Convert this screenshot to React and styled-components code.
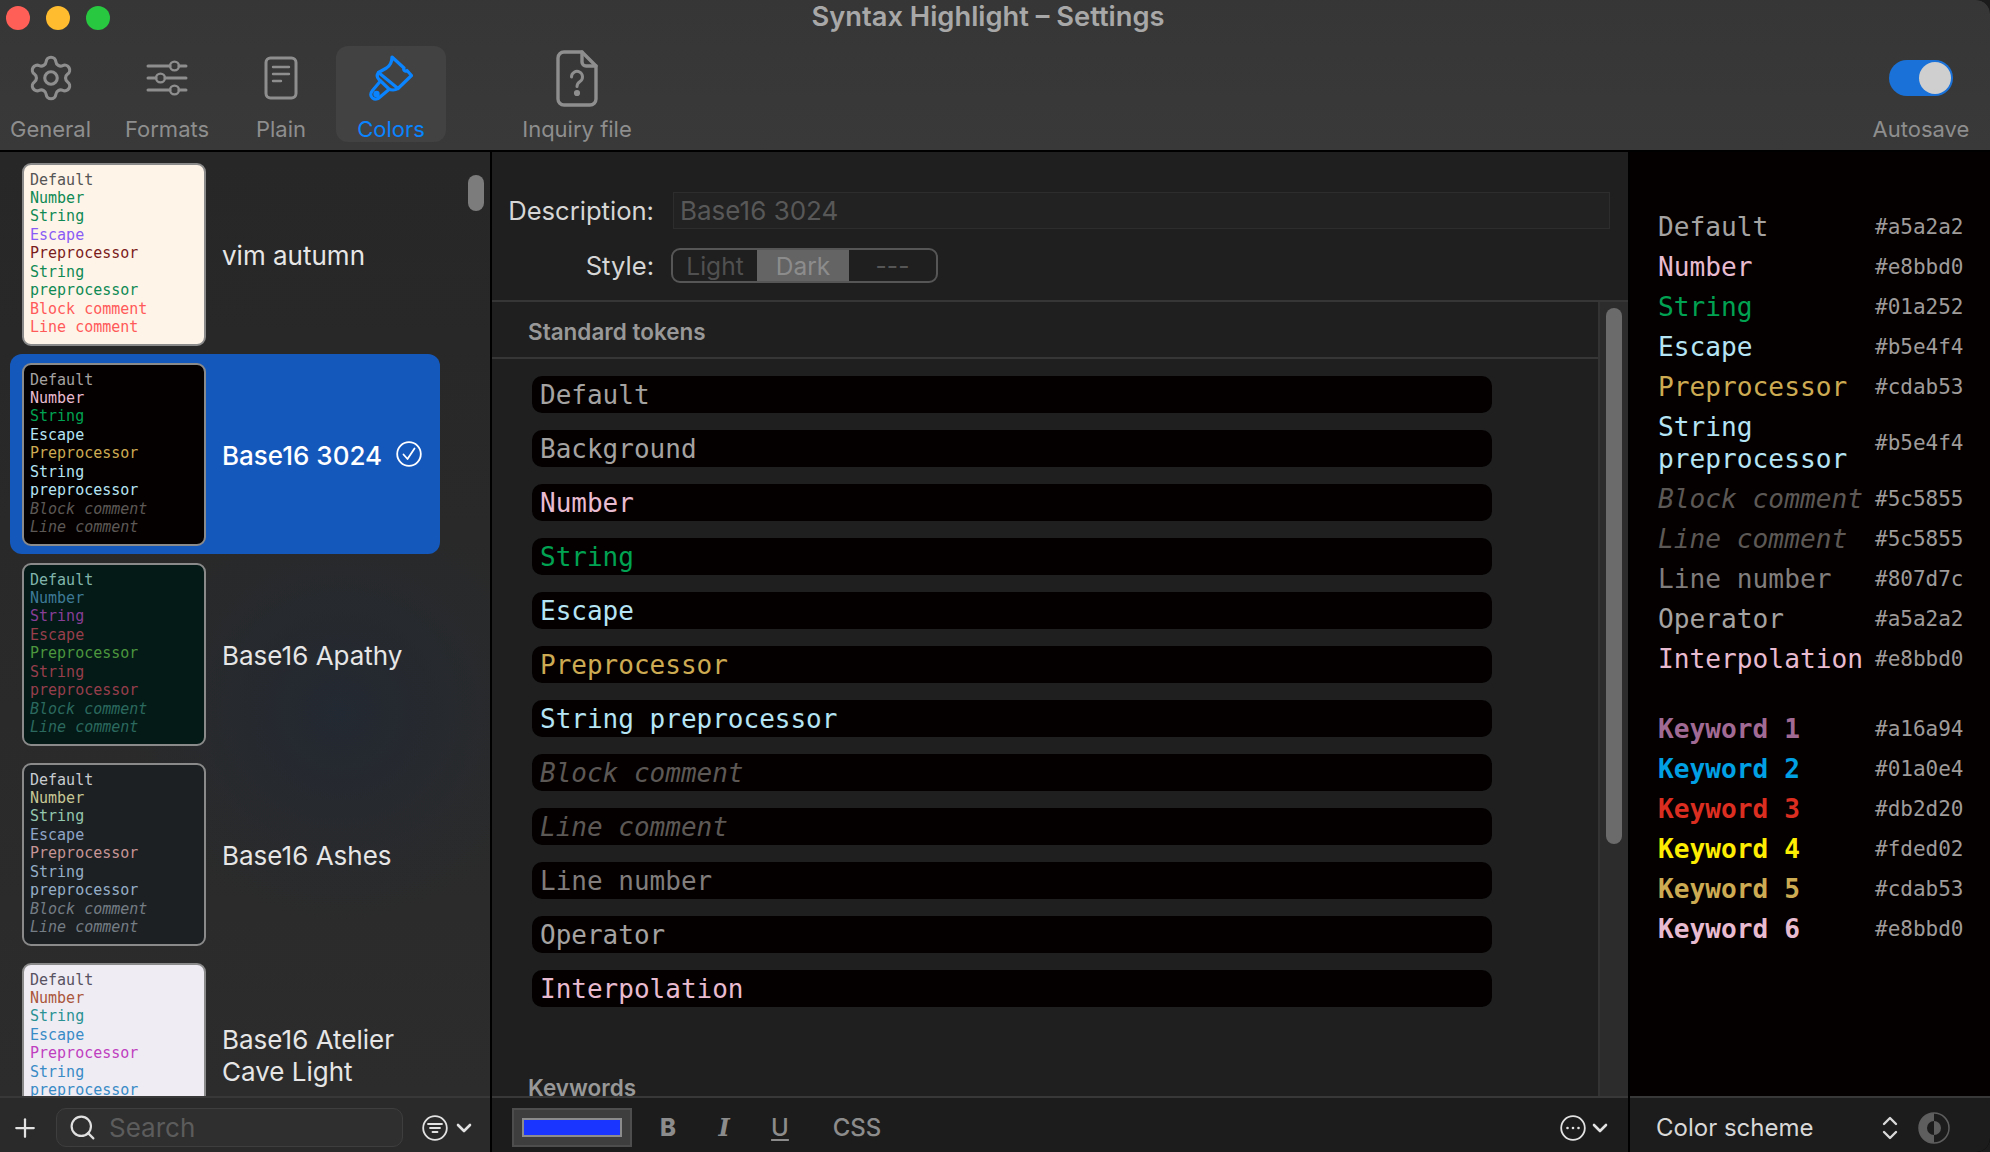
import React from 'react';
import styled, { createGlobalStyle } from 'styled-components';
import { Settings, Plus, Search, ChevronDown } from 'lucide-react';

const UI = `Inter, "Noto Sans", sans-serif`;
const MONO = `"DejaVu Sans Mono", "Liberation Mono", monospace`;

const Global = createGlobalStyle`
  html, body {
    margin: 0;
    padding: 0;
    background: #1c1c1c;
    overflow: hidden;
  }
  * { box-sizing: border-box; }
`;

const Win = styled.div`
  width: 1990px;
  height: 1152px;
  display: flex;
  flex-direction: column;
  overflow: hidden;
  font-family: ${UI};
  border-radius: 0 14px 14px 0;
  background: #000;
`;

const Top = styled.header`
  height: 150px;
  flex: none;
  background: linear-gradient(180deg, #363636 0%, #393939 100%);
`;

const TitleBar = styled.div`
  height: 36px;
  display: grid;
  grid-template-columns: 1fr auto 1fr;
  align-items: center;
  padding-right: 14px;
`;

const Lights = styled.div`
  display: flex;
  gap: 16px;
  padding-left: 6px;
`;

const Light = styled.span`
  width: 24px;
  height: 24px;
  border-radius: 50%;
  background: ${(p) => p.$c};
`;

const Title = styled.div`
  font-size: 27.3px;
  line-height: 32px;
  margin-top: -3px;
  font-weight: 600;
  color: #a8a8a8;
  white-space: nowrap;
`;

const Tools = styled.div`
  display: flex;
  height: 96px;
  margin-top: 10px;
`;

const Tool = styled.div`
  width: ${(p) => p.$w}px;
  margin-left: ${(p) => p.$ml || 0};
  flex: none;
  display: flex;
  flex-direction: column;
  align-items: center;
  border-radius: 12px;
  background: ${(p) => (p.$active ? '#424242' : 'transparent')};
  color: ${(p) => (p.$active ? '#0a84ff' : '#8e8e8e')};
`;

const ToolIcon = styled.div`
  height: 64px;
  flex: none;
  margin-bottom: 7px;
  display: flex;
  align-items: center;
  justify-content: center;
`;

const ToolLabel = styled.div`
  font-size: 22px;
  line-height: 25px;
  flex: none;
  white-space: nowrap;
`;

const Toggle = styled.div`
  width: 64px;
  height: 36px;
  padding: 2px;
  border-radius: 18px;
  background: #1a72d8;
  display: flex;
  justify-content: flex-end;
`;

const Knob = styled.span`
  width: 32px;
  height: 32px;
  border-radius: 50%;
  background: #cfcfcf;
`;

const Columns = styled.div`
  flex: 1;
  min-height: 0;
  margin-top: 2px;
  display: flex;
  gap: 2px;
`;

const Column = styled.section`
  width: ${(p) => p.$w}px;
  flex: none;
  display: flex;
  flex-direction: column;
  position: relative;
`;

const Scroll = styled.div`
  flex: 1;
  min-height: 0;
  overflow: hidden;
`;

const Footer = styled.footer`
  height: 56px;
  flex: none;
  border-top: 2px solid #383838;
  padding-top: 5px;
  background: #1c1c1c;
  display: flex;
  align-items: center;
`;

/* sidebar */
const SideScroll = styled(Scroll)`
  padding-top: 2px;
  background:
    radial-gradient(circle at 340px 560px, #232932 0, rgba(35, 41, 50, 0) 210px),
    linear-gradient(180deg, #272727 0%, #2c2c2c 100%);
`;

const SideThumb = styled.div`
  position: absolute;
  left: 468px;
  top: 23px;
  width: 16px;
  height: 36px;
  border-radius: 8px;
  background: #7c7c7c;
`;

const Row = styled.div`
  width: 430px;
  height: 200px;
  margin-left: 10px;
  padding-left: 12px;
  border-radius: 12px;
  display: flex;
  align-items: center;
  background: ${(p) => (p.$selected ? '#1558bc' : 'transparent')};
`;

const Thumb = styled.div`
  width: 184px;
  height: 183px;
  flex: none;
  border: 2px solid #8a8a8a;
  border-radius: 9px;
  padding: 6px 20px 0 6px;
  background: ${(p) => p.$bg};
`;

const ThumbClip = styled.div`
  height: 168px;
  overflow: hidden;
  font-family: ${MONO};
  font-size: 15px;
  line-height: 18.45px;
`;

const ThumbLine = styled.div`
  color: ${(p) => p.$c};
  font-style: ${(p) => (p.$i ? 'italic' : 'normal')};
`;

const RowName = styled.div`
  margin-left: 16px;
  padding-top: 3px;
  font-size: 26px;
  line-height: 32px;
  color: ${(p) => (p.$selected ? '#ffffff' : '#e6e6e6')};
  font-weight: ${(p) => (p.$selected ? 500 : 400)};
`;

const CheckWrap = styled.div`
  margin-left: 14px;
  display: flex;
  align-items: center;
`;

const SideFoot = styled(Footer)`
  background: #2a2a2a;
`;

const PlusBtn = styled.div`
  width: 56px;
  padding-left: 10px;
  color: #e2e2e2;
  display: flex;
`;

const SearchBox = styled.div`
  width: 347px;
  height: 39px;
  border-radius: 10px;
  border: 1px solid #3e3e3e;
  background: #2f2f2f;
  padding-left: 11px;
  display: flex;
  align-items: center;
  gap: 12px;
  color: #e0e0e0;
`;

const SearchText = styled.span`
  font-size: 26px;
  color: #5c5c5c;
`;

const IconBtn = styled.div`
  display: flex;
  align-items: center;
  gap: ${(p) => p.$gap || 3}px;
  color: #e2e2e2;
  margin: ${(p) => p.$m || '0'};
`;

/* center */
const Form = styled.div`
  height: 150px;
  flex: none;
  padding: 40px 18px 0 0;
  display: grid;
  grid-template-columns: 162px 1fr;
  column-gap: 17px;
  row-gap: 19px;
  grid-template-rows: 37px 35px;
  align-items: center;
  background: #1f1f1f;
  border-bottom: 2px solid #363636;
`;

const FormLabel = styled.div`
  font-size: 25.6px;
  text-align: right;
  color: #d6d6d6;
`;

const DescField = styled.div`
  height: 37px;
  margin-left: 2px;
  padding-left: 6px;
  display: flex;
  align-items: center;
  font-size: 26px;
  color: #585858;
  background: #222222;
  border: 1px solid #2d2d2d;
`;

const Segments = styled.div`
  width: 267px;
  height: 35px;
  display: flex;
  border: 2px solid #565656;
  border-radius: 9px;
  overflow: hidden;
`;

const Segment = styled.div`
  width: ${(p) => p.$w}px;
  flex: ${(p) => (p.$grow ? 1 : 'none')};
  display: flex;
  align-items: center;
  justify-content: center;
  font-size: 24.5px;
  color: ${(p) => p.$c};
  background: ${(p) => p.$bg || 'transparent'};
`;

const CenterBody = styled.div`
  flex: 1;
  min-height: 0;
  display: flex;
  background: #1f1f1f;
`;

const CenterScroll = styled.div`
  flex: 1;
  min-width: 0;
  overflow: hidden;
  border-right: 2px solid #333;
`;

const SectionHead = styled.div`
  height: 57px;
  padding: ${(p) => (p.$plain ? '0' : '4px')} 0 0 36px;
  display: flex;
  align-items: center;
  font-size: 22.5px;
  font-weight: 600;
  color: #989898;
  border-bottom: ${(p) => (p.$plain ? 'none' : '2px solid #363636')};
`;

const TokenList = styled.div`
  padding: 17px 0 52px 40px;
  display: flex;
  flex-direction: column;
  gap: 17px;
`;

const TokenRow = styled.div`
  width: 960px;
  height: 37px;
  border-radius: 10px;
  background: #040000;
  padding-left: 8px;
  display: flex;
  align-items: center;
  font-family: ${MONO};
  font-size: 26px;
  color: ${(p) => p.$c};
  font-style: ${(p) => (p.$i ? 'italic' : 'normal')};
`;

const Track = styled.div`
  width: 28px;
  flex: none;
  padding: 6px 6px 0 6px;
  background: #2c2c2c;
`;

const TrackThumb = styled.div`
  width: 16px;
  height: 536px;
  border-radius: 8px;
  background: #6b6b6b;
`;

const Well = styled.div`
  width: 120px;
  height: 39px;
  margin-left: 20px;
  padding: 8px 8px;
  background: #3e3e3e;
  border: 2px solid #4d4d4d;
`;

const WellColor = styled.div`
  height: 19px;
  background: #1935ff;
  border: 2px solid #8c8c8c;
`;

const Fmt = styled.span`
  width: ${(p) => p.$w}px;
  flex: none;
  text-align: center;
  font-size: 24px;
  line-height: 30px;
  color: #8c8c8c;
  font-weight: ${(p) => p.$weight || 500};
  font-family: ${(p) => (p.$serif ? '"DejaVu Serif", serif' : 'inherit')};
  font-style: ${(p) => (p.$i ? 'italic' : 'normal')};
  text-decoration: ${(p) => (p.$u ? 'underline' : 'none')};
  text-underline-offset: 3px;
`;

const FootBtns = styled.div`
  display: flex;
  align-items: center;
  margin-left: 8px;
`;

/* right panel */
const Preview = styled(Scroll)`
  background: #040000;
  padding: 55px 25px 0 28px;
`;

const PreviewGroup = styled.div`
  margin-bottom: ${(p) => (p.$last ? 0 : '30px')};
`;

const PreviewRow = styled.div`
  display: grid;
  grid-template-columns: 217px 1fr;
  align-items: center;
  padding: 4px 0;
`;

const PreviewName = styled.div`
  font-family: ${MONO};
  font-size: 26.2px;
  line-height: 32px;
  color: ${(p) => p.$c};
  font-style: ${(p) => (p.$i ? 'italic' : 'normal')};
  font-weight: ${(p) => (p.$b ? 700 : 400)};
`;

const PreviewHex = styled.div`
  font-family: ${MONO};
  font-size: 21px;
  color: #9e9b9a;
`;

const SchemeLabel = styled.div`
  margin-left: 26px;
  font-size: 24px;
  color: #d8d8d8;
  width: 226px;
`;

const GearIcon = () => <Settings size={50} strokeWidth={1.5} />;

const SlidersIcon = () => (
  <svg width="42" height="40" viewBox="0 0 42 40" fill="none" stroke="currentColor" strokeWidth="3" strokeLinecap="round">
    <path d="M2 8H24M33 8H40M2 20H10M19 20H40M2 32H24M33 32H40" />
    <circle cx="28.5" cy="8" r="4.4" strokeWidth="2.4" />
    <circle cx="14.5" cy="20" r="4.4" strokeWidth="2.4" />
    <circle cx="28.5" cy="32" r="4.4" strokeWidth="2.4" />
  </svg>
);

const DocIcon = () => (
  <svg width="34" height="44" viewBox="0 0 34 44" fill="none" stroke="currentColor" strokeWidth="3" strokeLinecap="round">
    <rect x="2" y="2" width="30" height="40" rx="4.5" />
    <path d="M9 11H25M9 18H25M9 25H17" strokeWidth="2.4" />
  </svg>
);

const BrushIcon = () => (
  <svg width="44" height="46" viewBox="0 0 44 46" fill="none" stroke="currentColor" strokeWidth="3.2" strokeLinejoin="round" strokeLinecap="round">
    <path d="M23 2L35 13C34 15 36 17 38 15.5L42.5 20.5L29 33.5L9.5 17.5L17.5 13C20.5 11 23 7 23 2Z" />
    <path d="M9.5 17.5C7.5 20 8 22.5 10 24.5L19.5 33.5C22 35.5 26 35.5 29 33.5" />
    <path d="M11.5 26L3.5 35.5C1 38.5 1.5 41.5 3.5 43C5.5 44.5 8.5 44.5 11 42L20 34.5" />
    <circle cx="7.5" cy="39" r="1.6" fill="currentColor" />
  </svg>
);

const InquiryIcon = () => (
  <svg width="42" height="57" viewBox="0 0 42 57" fill="none" stroke="currentColor" strokeWidth="3.4" strokeLinejoin="round" strokeLinecap="round">
    <path d="M8 2H26L40 16V49A6 6 0 0 1 34 55H8A6 6 0 0 1 2 49V8A6 6 0 0 1 8 2Z" />
    <path d="M26 2V12A4 4 0 0 0 30 16H40" />
    <path d="M15.5 27A5.5 5.5 0 1 1 24 31.5C22 32.8 21 34 21 36.5" strokeWidth="3" />
    <circle cx="21" cy="43" r="1.4" fill="currentColor" />
  </svg>
);

const CheckIcon = () => (
  <svg width="26" height="26" viewBox="0 0 26 26" fill="none" stroke="#fff" strokeWidth="1.8" strokeLinecap="round" strokeLinejoin="round">
    <circle cx="13" cy="13" r="11.8" />
    <path d="M7.5 13.5L11.5 18L18.5 7.5" />
  </svg>
);

const FilterIcon = () => (
  <svg width="26" height="26" viewBox="0 0 26 26" fill="none" stroke="currentColor" strokeWidth="1.8" strokeLinecap="round">
    <circle cx="13" cy="13" r="11.8" />
    <path d="M6 9H20M8 13H18M10.5 17H15.5" />
  </svg>
);

const DotsIcon = () => (
  <svg width="26" height="26" viewBox="0 0 26 26" fill="none" stroke="currentColor" strokeWidth="1.8">
    <circle cx="13" cy="13" r="11.8" />
    <circle cx="7.5" cy="13" r="1.3" fill="currentColor" stroke="none" />
    <circle cx="13" cy="13" r="1.3" fill="currentColor" stroke="none" />
    <circle cx="18.5" cy="13" r="1.3" fill="currentColor" stroke="none" />
  </svg>
);

const UpDownIcon = () => (
  <svg width="16" height="24" viewBox="0 0 16 24" fill="none" stroke="#d8d8d8" strokeWidth="2.4" strokeLinecap="round" strokeLinejoin="round">
    <path d="M2 8L8 2L14 8M2 16L8 22L14 16" />
  </svg>
);

const ContrastIcon = () => (
  <svg width="32" height="32" viewBox="0 0 32 32">
    <circle cx="16" cy="16" r="15" fill="none" stroke="#5e5e5e" strokeWidth="1.5" />
    <path d="M16 1A15 15 0 0 0 16 31Z" fill="#5e5e5e" />
    <path d="M16 9A7 7 0 0 0 16 23Z" fill="#1c1c1c" />
    <path d="M16 9A7 7 0 0 1 16 23Z" fill="#5e5e5e" />
  </svg>
);

const THEMES = [
  {
    name: 'vim autumn', bg: '#fff4e8',
    colors: ['#555555', '#0f8a55', '#0f8a55', '#8a5cf5', '#7a1c1c', '#0f8a55', '#ff5a5a'],
    italic: false,
  },
  {
    name: 'Base16 3024', bg: '#040000', selected: true,
    colors: ['#a5a2a2', '#e8bbd0', '#01a252', '#b5e4f4', '#cdab53', '#b5e4f4', '#5c5855'],
    italic: true,
  },
  {
    name: 'Base16 Apathy', bg: '#031a16',
    colors: ['#81b5ac', '#3e7996', '#883e96', '#963e4c', '#4c963e', '#963e4c', '#2b685e'],
    italic: true,
  },
  {
    name: 'Base16 Ashes', bg: '#1c2023',
    colors: ['#c7ccd1', '#c7c795', '#95c7ae', '#8fa5c7', '#c79595', '#95aec7', '#747c84'],
    italic: true,
  },
  {
    name: 'Base16 Atelier Cave Light', bg: '#efecf4',
    colors: ['#585260', '#aa573c', '#2a9292', '#398bc6', '#bf40bf', '#398bc6', '#7e7887'],
    italic: true,
  },
];

const TOKENS = [
  ['Default', '#a5a2a2'],
  ['Background', '#a5a2a2'],
  ['Number', '#e8bbd0'],
  ['String', '#01a252'],
  ['Escape', '#b5e4f4'],
  ['Preprocessor', '#cdab53'],
  ['String preprocessor', '#b5e4f4'],
  ['Block comment', '#5c5855', true],
  ['Line comment', '#5c5855', true],
  ['Line number', '#807d7c'],
  ['Operator', '#a5a2a2'],
  ['Interpolation', '#e8bbd0'],
];

const HEX = ['#a5a2a2', '#e8bbd0', '#01a252', '#b5e4f4', '#cdab53', '#b5e4f4', '#5c5855', '#5c5855', '#807d7c', '#a5a2a2', '#e8bbd0'];

const KEYWORDS = [
  ['Keyword 1', '#a16a94'],
  ['Keyword 2', '#01a0e4'],
  ['Keyword 3', '#db2d20'],
  ['Keyword 4', '#fded02'],
  ['Keyword 5', '#cdab53'],
  ['Keyword 6', '#e8bbd0'],
];

const ThemeRow = ({ theme }) => {
  const [def, num, str, esc, pre, strPre, com] = theme.colors;
  return (
    <Row $selected={theme.selected}>
      <Thumb $bg={theme.bg}>
        <ThumbClip>
          <ThumbLine $c={def}>Default</ThumbLine>
          <ThumbLine $c={num}>Number</ThumbLine>
          <ThumbLine $c={str}>String</ThumbLine>
          <ThumbLine $c={esc}>Escape</ThumbLine>
          <ThumbLine $c={pre}>Preprocessor</ThumbLine>
          <ThumbLine $c={strPre}>String preprocessor</ThumbLine>
          <ThumbLine $c={com} $i={theme.italic}>Block comment</ThumbLine>
          <ThumbLine $c={com} $i={theme.italic}>Line comment</ThumbLine>
          <ThumbLine $c={def}>Line number</ThumbLine>
        </ThumbClip>
      </Thumb>
      <RowName $selected={theme.selected}>{theme.name}</RowName>
      {theme.selected && <CheckWrap><CheckIcon /></CheckWrap>}
    </Row>
  );
};

export default function App() {
  return (
    <Win>
      <Global />
      <Top>
        <TitleBar>
          <Lights>
            <Light $c="#ff5f57" />
            <Light $c="#febc2e" />
            <Light $c="#28c840" />
          </Lights>
          <Title>Syntax Highlight – Settings</Title>
        </TitleBar>
        <Tools>
          <Tool $w={101}><ToolIcon><GearIcon /></ToolIcon><ToolLabel>General</ToolLabel></Tool>
          <Tool $w={132}><ToolIcon><SlidersIcon /></ToolIcon><ToolLabel>Formats</ToolLabel></Tool>
          <Tool $w={96}><ToolIcon><DocIcon /></ToolIcon><ToolLabel>Plain</ToolLabel></Tool>
          <Tool $w={110} $ml="7px" $active><ToolIcon><BrushIcon /></ToolIcon><ToolLabel>Colors</ToolLabel></Tool>
          <Tool $w={160} $ml="51px"><ToolIcon><InquiryIcon /></ToolIcon><ToolLabel>Inquiry file</ToolLabel></Tool>
          <Tool $w={138} $ml="auto"><ToolIcon><Toggle><Knob /></Toggle></ToolIcon><ToolLabel>Autosave</ToolLabel></Tool>
        </Tools>
      </Top>
      <Columns>
        <Column $w={490}>
          <SideScroll>
            {THEMES.map((t) => <ThemeRow key={t.name} theme={t} />)}
          </SideScroll>
          <SideThumb />
          <SideFoot>
            <PlusBtn><Plus size={30} strokeWidth={1.8} /></PlusBtn>
            <SearchBox>
              <Search size={29} strokeWidth={1.8} />
              <SearchText>Search</SearchText>
            </SearchBox>
            <IconBtn $gap={4} $m="0 0 0 19px"><FilterIcon /><ChevronDown size={24} strokeWidth={2.6} /></IconBtn>
          </SideFoot>
        </Column>
        <Column $w={1136}>
          <Form>
            <FormLabel>Description:</FormLabel>
            <DescField>Base16 3024</DescField>
            <FormLabel>Style:</FormLabel>
            <Segments>
              <Segment $w={84} $c="#505050">Light</Segment>
              <Segment $w={92} $c="#8c8c8c" $bg="#646464">Dark</Segment>
              <Segment $grow $c="#565656">---</Segment>
            </Segments>
          </Form>
          <CenterBody>
            <CenterScroll>
              <SectionHead>Standard tokens</SectionHead>
              <TokenList>
                {TOKENS.map(([label, c, i]) => (
                  <TokenRow key={label} $c={c} $i={i}>{label}</TokenRow>
                ))}
              </TokenList>
              <SectionHead $plain>Keywords</SectionHead>
            </CenterScroll>
            <Track><TrackThumb /></Track>
          </CenterBody>
          <Footer>
            <Well><WellColor /></Well>
            <FootBtns>
              <Fmt $w={56} $weight={800}>B</Fmt>
              <Fmt $w={56} $weight={700} $serif $i>I</Fmt>
              <Fmt $w={56} $u>U</Fmt>
              <Fmt $w={98}>CSS</Fmt>
            </FootBtns>
            <IconBtn $gap={2} $m="0 16px 0 auto"><DotsIcon /><ChevronDown size={24} strokeWidth={2.6} /></IconBtn>
          </Footer>
        </Column>
        <Column $w={360}>
          <Preview>
            <PreviewGroup>
              {TOKENS.filter(([l]) => l !== 'Background').map(([label, c, i], idx) => (
                <PreviewRow key={label}>
                  <PreviewName $c={c} $i={i}>{label}</PreviewName>
                  <PreviewHex>{HEX[idx]}</PreviewHex>
                </PreviewRow>
              ))}
            </PreviewGroup>
            <PreviewGroup $last>
              {KEYWORDS.map(([label, c]) => (
                <PreviewRow key={label}>
                  <PreviewName $c={c} $b>{label}</PreviewName>
                  <PreviewHex>{c}</PreviewHex>
                </PreviewRow>
              ))}
            </PreviewGroup>
          </Preview>
          <Footer>
            <SchemeLabel>Color scheme</SchemeLabel>
            <UpDownIcon />
            <IconBtn $m="0 0 0 20px"><ContrastIcon /></IconBtn>
          </Footer>
        </Column>
      </Columns>
    </Win>
  );
}
